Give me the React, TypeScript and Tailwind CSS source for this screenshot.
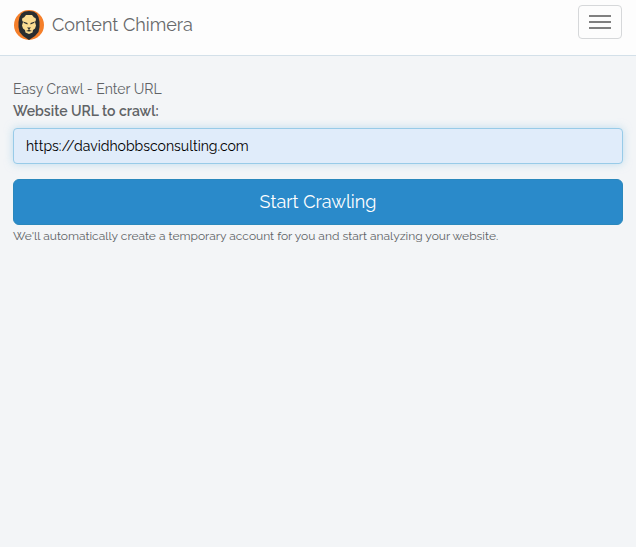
import { useState } from "react"

const LionLogo = () => {
  return (
    <svg viewBox="0 0 60 60" className="h-[30px] w-[30px]" aria-hidden="true">
      <circle cx="30" cy="30" r="30" fill="#f57f2a" />
      {/* mane */}
      <path
        d="M30 2 L39 3 L45 7 L49 14 L51 24 L51 34 L49 44 L42 52 L30 60 L18 52 L11 44 L9 34 L9 24 L11 14 L15 7 L21 3 Z"
        fill="#2a2d2f"
      />
      {/* face */}
      <path
        d="M24 10 L36 10 L40 15 L43 16 L44 20 L42 24 L44 31 L42 37 L38 40 L37 45 L30 48 L23 45 L22 40 L18 37 L16 31 L18 24 L16 20 L17 16 L20 15 Z"
        fill="#fbdc92"
      />
      <path d="M18 23 L27 26 L27 29 L20 26 Z" fill="#2a2d2f" />
      <path d="M42 23 L33 26 L33 29 L40 26 Z" fill="#2a2d2f" />
      <path d="M26 35 L34 35 L31 38 L31 40 L36 42 L30 43 L24 42 L29 40 L29 38 Z" fill="#2a2d2f" />
    </svg>
  )
}

const Navbar = () => {
  return (
    <nav className="flex h-14 items-start justify-between border-b border-[#d3e0e9] bg-[#fdfdfd] px-[14px]">
      <a href="#" className="flex items-center gap-2 pt-[10px] text-[18px] leading-[30px] text-[#67696b]">
        <LionLogo />
        Content Chimera
      </a>
      <button
        type="button"
        aria-label="Toggle navigation"
        className="mt-[5px] flex h-[34px] w-11 flex-col items-center justify-center gap-1 rounded border border-[#d6d8da]"
      >
        <span className="h-0.5 w-[22px] bg-[#808080]" />
        <span className="h-0.5 w-[22px] bg-[#808080]" />
        <span className="h-0.5 w-[22px] bg-[#808080]" />
      </button>
    </nav>
  )
}

const App = () => {
  const [url, setUrl] = useState("https://davidhobbsconsulting.com")

  return (
    <div className="min-h-screen bg-[#f3f5f7] font-['Raleway','Lato',sans-serif] text-[14px] leading-[22px] text-[#606366]">
      <Navbar />
      <form className="px-[13px] pt-[22px]" onSubmit={(e) => e.preventDefault()}>
        <h1>Easy Crawl - Enter URL</h1>
        <label htmlFor="url" className="block font-semibold">
          Website URL to crawl:
        </label>
        <input
          id="url"
          type="text"
          value={url}
          onChange={(e) => setUrl(e.target.value)}
          className="mt-[6px] block h-9 w-full rounded border border-[#98cbe8] bg-[#e0ecfa] px-3 text-black shadow-[0_0_8px_rgba(152,203,232,0.6)] outline-none"
        />
        <button
          type="submit"
          className="mt-[15px] block h-[46px] w-full rounded-md border border-[#2a88bd] bg-[#2a8aca] text-[18px] text-white"
        >
          Start Crawling
        </button>
        <p className="text-[12px]">
          We'll automatically create a temporary account for you and start analyzing your website.
        </p>
      </form>
    </div>
  )
}

export default App
